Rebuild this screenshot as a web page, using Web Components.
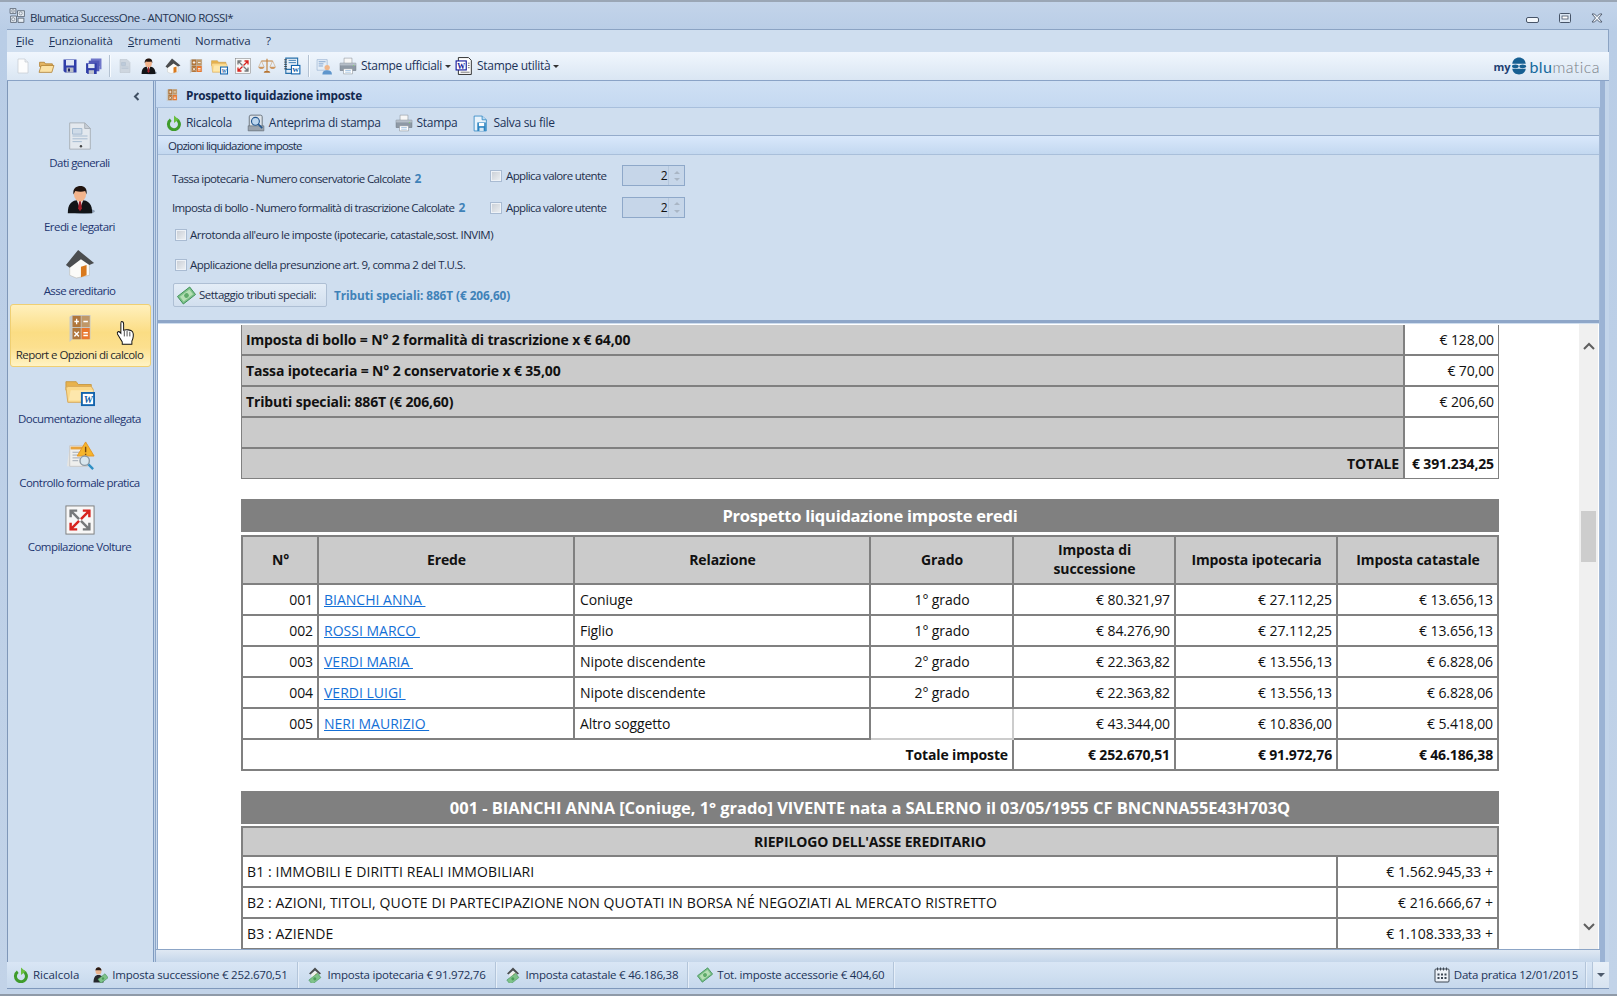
<!DOCTYPE html>
<html lang="it"><head><meta charset="utf-8"><title>Blumatica SuccessOne</title>
<style>
html,body{margin:0;padding:0;height:996px;overflow:hidden;background:#bcd0e8}
body{font-family:"Open Sans","Liberation Sans",sans-serif}
</style></head><body>
<app-window>
  <win-title slot="title">Blumatica SuccessOne - ANTONIO ROSSI*</win-title>
  <win-menu slot="menu"></win-menu>
  <win-toolbar slot="toolbar"></win-toolbar>
  <nav-rail slot="rail">
    <nav-item icon="doc">Dati generali</nav-item>
    <nav-item icon="person">Eredi e legatari</nav-item>
    <nav-item icon="house">Asse ereditario</nav-item>
    <nav-item icon="calc" active>Report e Opzioni di calcolo</nav-item>
    <nav-item icon="folderword">Documentazione allegata</nav-item>
    <nav-item icon="audit">Controllo formale pratica</nav-item>
    <nav-item icon="volture">Compilazione Volture</nav-item>
  </nav-rail>
  <task-panel slot="main">
    <task-toolbar slot="toolbar"></task-toolbar>
    <options-panel slot="options"></options-panel>
    <report-view slot="report"></report-view>
  </task-panel>
  <status-bar slot="status"></status-bar>
</app-window>
<script>
const ICONS={
doc:`<path d="M5 2h16l6 6v22H5z" fill="#e3e8ee" stroke="#a9b0b8"/><path d="M21 2v6h6z" fill="#c8ced6" stroke="#a9b0b8"/><path d="M8 8h10v6H8zM8 16h16M8 19h16M8 22h10" stroke="#a3b9cf" fill="#cfdbe8"/><circle cx="17" cy="27" r="1.3" fill="#444"/>`,
person:`<ellipse cx="20" cy="28" rx="12" ry="3" fill="#8f9fb4"/><path d="M3 30c0-9 3-14 13-14s13 5 13 14z" fill="#121417"/><path d="M12.500 16l3.500 9 3.500-9z" fill="#eee"/><path d="M15 17h2l1 8-2 3-2-3z" fill="#a3212b"/><ellipse cx="16" cy="9.500" rx="6.500" ry="8" fill="#f2b48c"/><path d="M9 10C8 3 12.500 1 16.500 1S24 3.500 23 10l-1.500-3.500c-3 1-6.500 1-10.500 0z" fill="#21140f"/>`,
house:`<path d="M5 18L17 9l9 7v12l-14 3-7-3z" fill="#fbfbf8" stroke="#bdbdb7" stroke-width=".7"/><path d="M17 19l6-2v11l-6 2z" fill="#d9791c"/><path d="M1 17L14 1l17 14-5 2-9-6L5 20z" fill="#4b4d4f"/>`,
calc:`<path d="M2 4l4-2h24v26H6l-4 3z" fill="#c7c9c8"/><path d="M6 3h11v12H6z" fill="#b0763c"/><path d="M18 3h11v12H18z" fill="#c09868"/><path d="M6 16h11v12H6z" fill="#b0763c"/><path d="M18 16h11v12H18z" fill="#e8772e"/><path d="M8.500 9h6M11.500 6v6M20.500 9h6M8.500 20l6 5M14.500 20l-6 5M20.500 21h6M20.500 24h6" stroke="#fff" stroke-width="1.700"/>`,
folderword:`<path d="M1 5h11l2 3h14v6H1z" fill="#e8b24c" stroke="#c89a46"/><path d="M3 27L1 11l3-1h24l2 3v14z" fill="#fbd98a" stroke="#d8a95a"/><path d="M4 25l2-11h24l-3 11z" fill="#fde7ac"/><path d="M17 16h15v15H17z" fill="#1364ad"/><path d="M19 18h11v11H19z" fill="#fff"/><text x="24.500" y="27.500" text-anchor="middle" font-family="Liberation Serif" font-style="italic" font-weight="700" font-size="11" fill="#0f5ea6">W</text>`,
audit:`<path d="M5 6h19v21H2z" fill="#e5e5e3"/><path d="M5 5h19v22H5z" fill="#efefed" stroke="#c7c7c7"/><path d="M6 6h14v3H6z" fill="#e8a33c"/><path d="M8 12h9M8 15h7M8 18h8M8 21h6" stroke="#9fa9b3"/><path d="M22 1l9 15H13z" fill="#f6b52a" stroke="#e29324"/><path d="M22 6v6M22 13.500v1.500" stroke="#7a4a10" stroke-width="1.500"/><circle cx="21" cy="21" r="5" fill="#d8e6ee" stroke="#8b98a3" stroke-width="1.500"/><path d="M25 25l5 5" stroke="#2f8fc4" stroke-width="2.500"/>`,
volture:`<rect x="1" y="1" width="30" height="30" fill="#f7f7f7" stroke="#7b7b7b"/><g fill="none" stroke-width="2.600"><path d="M6 13V6h7M6 6l9 9M26 19v7h-7M26 26l-9-9" stroke="#77797b"/><path d="M26 13V6h-7M26 6l-9 9M6 19v7h7M6 26l9-9" stroke="#d7231e"/></g>`,
fnew:`<path d="M6 2h14l6 6v22H6z" fill="#fdfdfd" stroke="#c7ccd3" stroke-width="1.500"/><path d="M20 2v6h6" fill="#eceff3" stroke="#c7ccd3" stroke-width="1.500"/>`,
open:`<path d="M3 8h9l2 3h13v5H3z" fill="#e5b765" stroke="#b07d2f" stroke-width="1.500"/><path d="M2 27l4-13h24l-4 13z" fill="#fbe2a5" stroke="#b07d2f" stroke-width="1.500"/>`,
save:`<path d="M3 3h26v26H6l-3-3z" fill="#2f3da8"/><path d="M8 4h16v11H8z" fill="#dfe6f4"/><path d="M9 19h14v10H9z" fill="#b9bdc6"/><path d="M12 21h4v6h-4z" fill="#222a66"/>`,
saveall:`<path d="M11 1h20v20h-4v-6H11z" fill="#6f76c9"/><path d="M7 5h20v20H7z" fill="#5158b8"/><path d="M2 10h20v20H5l-3-3z" fill="#2f3da8"/><path d="M6 11h12v8H6z" fill="#dfe6f4"/><path d="M7 23h10v7H7z" fill="#c0c4cc"/>`,
fdoc:`<path d="M6 3h14l6 6v20H6z" fill="#ced6df" stroke="#b8c0c9"/><path d="M9 9h8v6H9zM9 18h14M9 21h14" stroke="#aebccc" fill="#bccada"/>`,
scales:`<path d="M16 3v23M6 7h20" stroke="#c1803a" stroke-width="2"/><path d="M10 28h12l-2-3h-8z" fill="#b5722f"/><path d="M6 7l-5 11h10zM26 7l-5 11h10z" fill="none" stroke="#c99a63"/><path d="M1 18c1 4 9 4 10 0zM21 18c1 4 9 4 10 0z" fill="#c9813b"/>`,
wordbook:`<path d="M5 2h21v20H5z" fill="#e8f0f8" stroke="#2770aa" stroke-width="2"/><path d="M2 5h5M2 9h5M2 13h5M2 17h5M2 21h5" stroke="#333" stroke-width="1.500"/><path d="M10 6h13M10 10h13" stroke="#2770aa" stroke-width="1.500"/><path d="M5 22v7h17" fill="none" stroke="#2770aa" stroke-width="2"/><path d="M14 14h17v17H14z" fill="#1364ad"/><path d="M16 16h13v13H16z" fill="#fff"/><text x="22.500" y="27.500" text-anchor="middle" font-family="Liberation Serif" font-weight="700" font-size="12" fill="#0f5ea6">W</text>`,
userdoc:`<path d="M2 3h19v20H2z" fill="#e5eef8" stroke="#87a5c9"/><path d="M5 7h13M5 11h9M5 15h8" stroke="#6f96c5" stroke-width="1.500"/><circle cx="21" cy="18" r="5" fill="#f0b68a"/><path d="M12 31c0-6 3-8 9-8s9 2 9 8z" fill="#5f96cc"/>`,
printer:`<path d="M9 2h14v10H9z" fill="#f7f7f7" stroke="#8b9299"/><path d="M2 11h28v13H2z" fill="#8e99a5" stroke="#6a737c"/><path d="M2 11h28v4H2z" fill="#b5bec8"/><path d="M8 21h16v9H8z" fill="#fff" stroke="#8b9299"/><path d="M11 24h10M11 27h10" stroke="#6fa0cf"/><circle cx="26" cy="15" r="1" fill="#7fdc68"/>`,
worddoc:`<path d="M6 1h18l5 5v25H6z" fill="#fff" stroke="#111" stroke-width="1.500"/><path d="M1 6h20v18H1z" fill="#11189b"/><path d="M3 8h16v14H3z" fill="#fff"/><text x="11" y="20.500" text-anchor="middle" font-family="Liberation Serif" font-weight="700" font-size="14" fill="#11189b">W</text><path d="M23 11h3M23 15h3M23 19h3M10 27h16" stroke="#111"/>`,
refresh:`<path d="M9.500 9.500a11 11 0 1 0 11-1" fill="none" stroke="#3f9c2c" stroke-width="6"/><path d="M14 1l9 8-9 7z" fill="#69bf3f" transform="translate(2 0)"/>`,
preview:`<path d="M4 5a3 3 0 0 1 3-3h17a3 3 0 0 1 3 3v24H4z" fill="#dee4ea" stroke="#5d6670" stroke-width="1.500"/><path d="M2 21h28v9H2z" fill="#9aa3ad" stroke="#5d6670"/><circle cx="15" cy="13" r="7" fill="#bcd6ee" stroke="#24578f" stroke-width="2"/><path d="M20 18l7 7" stroke="#24578f" stroke-width="3"/>`,
savefile:`<path d="M4 2h15l8 7v21H4z" fill="#e8f3fc" stroke="#2c84c1" stroke-width="1.500"/><path d="M19 2v7h8" fill="#bedcf2" stroke="#2c84c1" stroke-width="1.500"/><path d="M10 14h16v16H10z" fill="#2c84c1"/><path d="M13 15h10v6H13z" fill="#fff"/><path d="M14 24h8v6h-8z" fill="#d8e8f4"/>`,
money:`<g transform="rotate(-38 16 16)"><rect x="3" y="8" width="26" height="16" fill="#7fc28a" stroke="#3c8f55" stroke-width="1.500"/><rect x="6" y="11" width="20" height="10" fill="#b6dfb5"/><circle cx="16" cy="16" r="4" fill="#5fab6a"/></g>`,
personmoney:`<ellipse cx="13" cy="8" rx="6" ry="7" fill="#e9b48f"/><path d="M7 7c0-5 3-6.500 6-6.500S19 3 19 7c-4 0-8-1-12 0z" fill="#2a1a14"/><path d="M3 31c0-10 3-15 10-15s10 5 10 15z" fill="#26282c"/><g transform="rotate(-38 22 23)"><rect x="13" y="18" width="18" height="10" fill="#7fc28a" stroke="#3c8f55"/><circle cx="22" cy="23" r="2.500" fill="#4a9d58"/></g>`,
housemoney:`<path d="M14 1L2 13l3 2 9-8 9 8 3-2z" fill="#4b4d4f"/><path d="M7 14l7-6 7 6v8H7z" fill="#efefec"/><path d="M15 14l4-1v8l-4 1z" fill="#d9791c"/><g transform="rotate(-38 14 24)"><rect x="3" y="18" width="22" height="11" fill="#7fc28a" stroke="#3c8f55"/><circle cx="14" cy="23.500" r="3" fill="#4a9d58"/></g>`,
calendar:`<rect x="2" y="4" width="28" height="26" rx="2" fill="#edf2f8" stroke="#3c4652" stroke-width="2"/><path d="M7 1v6M13 1v6M19 1v6M25 1v6" stroke="#3c4652" stroke-width="2"/><path d="M7 13h4v4H7zM14 13h4v4h-4zM21 13h4v4h-4zM7 20h4v4H7zM14 20h4v4h-4zM21 20h4v4h-4z" fill="#3c4652"/>`,
app:`<path d="M2 3h11v9H2zM16 7h13v11H16zM3 17h11v12H3zM17 21h11v8H17z" fill="#e8eef5" stroke="#4f5b68" stroke-width="1.500"/><circle cx="7.500" cy="7.500" r="2.500" fill="none" stroke="#4f5b68"/><circle cx="22" cy="12" r="3" fill="none" stroke="#4f5b68"/><circle cx="8" cy="23" r="3" fill="none" stroke="#4f5b68"/>`,
hand:`<path d="M11 2c2 0 3 1 3 3v8c3-1 11-.5 13 2 2 3 1 9-1 12v4H12v-3L5 18c-1-3 2-4 4-2l1 1V5c0-2 0-3 1-3z" fill="#fff" stroke="#111" stroke-width="1.400"/><path d="M15 14v7M19 14v7M23 15v6" stroke="#111" stroke-width="1"/>`
};
function def(name,css,html,setup){
  customElements.define(name,class extends HTMLElement{
    constructor(){super();const r=this.attachShadow({mode:"open"});r.innerHTML=`<style>${css}</style>`+(typeof html==="function"?html(this):html);}
    connectedCallback(){if(setup)setup(this)}
  });
}
customElements.define("ui-icon",class extends HTMLElement{
  connectedCallback(){
    if(this.shadowRoot)return;
    const s=this.getAttribute("size")||16,n=this.getAttribute("name");
    const w=this.getAttribute("w")||s,h=this.getAttribute("h")||s;
    this.attachShadow({mode:"open"}).innerHTML=`<style>:host{display:inline-flex;flex:none;width:${w}px;height:${h}px}svg{display:block;width:100%;height:100%}</style><svg viewBox="0 0 32 32" preserveAspectRatio="none">${ICONS[n]||""}</svg>`;
  }
});
const UI=`font:11.5px/1.2 "Open Sans","Liberation Sans",sans-serif;letter-spacing:-.42px;color:#1c3358`;

def("app-window",`
:host{display:flex;flex-direction:column;width:1617px;height:996px;box-sizing:border-box;background:linear-gradient(#c3d4ea,#b9cde6 30px,#c2d3e8);border-top:2px solid #9aa6b5;border-bottom:2px solid #8f9aa8;overflow:hidden}
.frame{margin:0 8px 0 7px;display:flex;flex-direction:column;flex:1;min-height:0}
.work{display:flex;flex:1;min-height:0;background:#c3d5ea;border-top:1px solid #8aa3c6}
`,`<slot name="title"></slot><div class="frame"><slot name="menu"></slot><slot name="toolbar"></slot><div class="work"><slot name="rail"></slot><slot name="main"></slot></div><slot name="status"></slot></div><div style="height:5px"></div>`);

def("win-title",`
:host{display:flex;align-items:center;height:27px;padding-left:9px;${UI};letter-spacing:-.55px;color:#1f3350;flex:none}
.t{margin-left:4px;padding-top:5px;font-size:11.5px}
.c{margin-left:auto;display:flex;align-items:center;padding-right:14px;gap:20px;padding-top:4px}
svg{display:block}
`,`<ui-icon name="app" size="17"></ui-icon><span class="t"><slot></slot></span>
<div class="c">
<svg width="13" height="6" viewBox="0 0 13 6" style="margin-top:5px"><rect x=".5" y=".5" width="12" height="5" rx="1.500" fill="#f3f7fb" stroke="#475468"/></svg>
<svg width="12" height="10" viewBox="0 0 12 10"><rect x=".5" y=".5" width="11" height="9" rx="1" fill="#dbe6f3" stroke="#475468"/><rect x="3" y="3" width="6" height="3" fill="#fff" stroke="#475468" stroke-width=".8"/></svg>
<svg width="12" height="10" viewBox="0 0 12 10"><path d="M1 1h2.500L6 3.500 8.500 1H11L7.500 5 11 9H8.500L6 6.500 3.500 9H1L4.500 5z" fill="#f3f7fb" stroke="#475468" stroke-width=".9"/></svg>
</div>`);

def("win-menu",`
:host{display:block;height:23px;flex:none;background:#cfdeef;border-top:1px solid #8ba3c3;border-right:1px solid #8ba3c3;box-sizing:border-box}
nav{display:flex;height:100%;align-items:center;${UI};font-size:11.500px;letter-spacing:-.1px;padding-left:9px;position:relative}
span{position:absolute;top:4px}u{text-decoration:underline}
`,`<nav>
<span style="left:9px"><u>F</u>ile</span><span style="left:42px"><u>F</u>unzionalità</span><span style="left:121px"><u>S</u>trumenti</span><span style="left:188px">Normativa</span><span style="left:259px">?</span></nav>`);

def("tool-btn",`
:host{display:inline-flex;align-items:center;height:100%;flex:none}
.l{margin-left:4px}
.car{width:0;height:0;border:3px solid transparent;border-top:3px solid #333;border-bottom:0;margin-left:3px;margin-top:1px}
`,h=>`<ui-icon name="${h.getAttribute("icon")}" w="${h.getAttribute("w")||h.getAttribute("size")||16}" h="${h.getAttribute("size")||16}"></ui-icon>${h.textContent.trim()?`<span class="l"><slot></slot></span>`:""}${h.hasAttribute("caret")?'<i class="car"></i>':""}`);

def("win-toolbar",`
:host{display:flex;align-items:center;height:28px;flex:none;background:linear-gradient(#f0f6fd,#dae6f3);padding-left:8px;box-sizing:border-box;${UI};font-size:12px;letter-spacing:-.3px;margin-right:0}
.g{display:flex;align-items:center;height:100%;gap:7px}
.s{width:1px;height:22px;background:#b4c2d2;box-shadow:1px 0 #f7fbff;margin:0 7px 0 7px}
.logo{margin-left:auto;display:flex;align-items:center;gap:0;padding-right:9px;font:300 16px "Lato",sans-serif;letter-spacing:.45px}
.my{font:700 11px "Open Sans",sans-serif;color:#1d3f73;letter-spacing:-.1px}
.b{color:#16699d;font-weight:400;margin-left:1px}.m{color:#7a8087}
`,`<div class="g">
<tool-btn icon="fnew" size="16"></tool-btn><tool-btn icon="open" size="17"></tool-btn><tool-btn icon="save" size="16"></tool-btn><tool-btn icon="saveall" size="17"></tool-btn></div><i class="s"></i>
<div class="g"><tool-btn icon="fdoc" size="16"></tool-btn><tool-btn icon="person" size="17"></tool-btn><tool-btn icon="house" size="16" style="margin-left:1px"></tool-btn><tool-btn icon="calc" size="16" w="14" style="margin-left:1px"></tool-btn><tool-btn icon="folderword" size="17" style="margin-left:1px"></tool-btn><tool-btn icon="volture" size="16"></tool-btn><tool-btn icon="scales" size="18"></tool-btn><tool-btn icon="wordbook" size="18"></tool-btn></div><i class="s" style="margin-left:7px"></i>
<tool-btn icon="userdoc" size="17"></tool-btn><tool-btn icon="printer" size="18" caret style="margin-left:6px">Stampe ufficiali</tool-btn><tool-btn icon="worddoc" size="18" caret style="margin-left:4px">Stampe utilità</tool-btn>
<div class="logo"><span class="my">my</span><svg width="18" height="18" viewBox="0 0 32 32"><path d="M4 12C5 5 10 1 16 1s11 4 12 11z" fill="#165f92"/><path d="M4 21h24c-1 7-6 10-12 10S5 28 4 21z" fill="#165f92"/><ellipse cx="9.500" cy="16.500" rx="6" ry="3.300" fill="#165f92"/><ellipse cx="22.500" cy="16.500" rx="6" ry="3.300" fill="#165f92"/></svg><span><span class="b">blu</span><span class="m">matica</span></span></div>`);

def("nav-rail",`
:host{display:flex;flex-direction:column;width:147px;flex:none;box-sizing:border-box;background:#cfdeef;border-left:1px solid #7f97b8;border-right:1px solid #7f9bc0;padding:0 2px}
.c{height:31px;display:flex;align-items:center;justify-content:flex-end;padding-right:11px;flex:none}
.list{display:flex;flex-direction:column;gap:1px}
`,`<div class="c"><svg width="7" height="9" viewBox="0 0 7 9"><path d="M5.500 1L2 4.500 5.500 8" fill="none" stroke="#3f4f63" stroke-width="2"/></svg></div><div class="list"><slot></slot></div>`);

def("nav-item",`
:host{display:flex;flex-direction:column;align-items:center;height:63px;box-sizing:border-box;padding:7px 2px 0 0;border:1px solid transparent;border-radius:3px;position:relative;${UI};font-size:11.500px;letter-spacing:-.57px;color:#1d3570}
:host([active]){background:linear-gradient(#fff0bd,#fbdd84 45%,#fce08f 70%,#fff3c4);border-color:#efcf73;color:#2a2a2a}
.i{height:31px;display:flex;align-items:center;justify-content:center}
.l{margin-top:5px;white-space:nowrap}
.h{position:absolute;left:103px;top:15px}
`,h=>{const c=h.getAttribute("icon")==="calc";return `<div class="i"><ui-icon name="${h.getAttribute("icon")}" w="${c?24:30}" h="30"></ui-icon></div><div class="l"><slot></slot></div>${h.hasAttribute("active")?'<ui-icon class="h" name="hand" w="22" h="25"></ui-icon>':""}`});

def("task-panel",`
:host{display:flex;flex-direction:column;width:1450px;margin-left:1px;flex:none;box-sizing:border-box;border-left:1px solid #8da6c8;border-right:5px solid #9bb3d4;background:#c9daee}
.h{height:27px;flex:none;display:flex;align-items:center;padding:2px 0 0 10px;gap:8px;background:linear-gradient(#cfe0f4,#c5d9f1);border-bottom:1px solid #a8bfdc;box-sizing:border-box;${UI};font-weight:700;font-size:11.800px;letter-spacing:-.27px;color:#13294f}
.b{flex:1;display:flex;flex-direction:column;min-height:0;margin:0 0 0 1px;background:#cfdeef;border-left:1px solid #8da6c8;border-right:1px solid #a3b9d6}
.f{height:12px;flex:none;background:linear-gradient(#dfe8f3,#c5d6ea);border-top:1px solid #8ca5c6}
`,`<div class="h"><ui-icon name="calc" size="14" w="12"></ui-icon>Prospetto liquidazione imposte</div><div class="b"><slot name="toolbar"></slot><slot name="options"></slot><slot name="report"></slot></div><div class="f"></div>`);

def("task-toolbar",`
:host{display:flex;align-items:center;height:27px;flex:none;padding:3px 0 0 8px;gap:15px;background:#cfdeef;box-sizing:border-box;${UI};font-size:12px;letter-spacing:-.3px}
`,`<tool-btn icon="refresh" size="16">Ricalcola</tool-btn><tool-btn icon="preview" size="18">Anteprima di stampa</tool-btn><tool-btn icon="printer" size="18" style="margin-left:-1px">Stampa</tool-btn><tool-btn icon="savefile" size="17">Salva su file</tool-btn>`);

def("check-box",`
:host{display:inline-block;width:12px;height:12px;flex:none;box-sizing:border-box;background:linear-gradient(135deg,#c8cdd4,#eef1f4);border:1px solid #a9bbd2;box-shadow:inset 0 0 0 1px #eef2f7}
`,``);
def("spin-box",`
:host{display:inline-flex;width:63px;height:21px;box-sizing:border-box;flex:none;background:#c6d6e9;border:1px solid #8ea8c9;font:12px "Open Sans",sans-serif;color:#111}
.v{flex:1;text-align:right;padding-right:1px;line-height:19px}
.a{width:15px;border-left:1px solid #b5c7dc;display:flex;flex-direction:column;align-items:center;justify-content:space-evenly}
i{width:0;height:0;border:3px solid transparent}
.u{border-bottom:3px solid #a9b6c5;border-top:0}.d{border-top:3px solid #a9b6c5;border-bottom:0}
`,`<span class="v"><slot></slot></span><span class="a"><i class="u"></i><i class="d"></i></span>`);

def("options-panel",`
:host{display:block;flex:none;background:#cfdeef;border-bottom:3px solid #8ea6c8;${UI};font-size:11.500px;letter-spacing:-.52px;color:#1e2f4c}
.h{height:20px;box-sizing:border-box;display:flex;align-items:center;padding:1px 0 0 10px;background:linear-gradient(#d9e8fb,#c3d8f0);border-top:1px solid #94abcb;border-bottom:1px solid #a9bfda;letter-spacing:-.78px}
.body{height:165px;box-sizing:border-box;padding:10px 0 0 14px;display:flex;flex-direction:column}
.r{display:grid;grid-template-columns:318px 12px 120px 63px;align-items:center;height:21px}
.r b{color:#3f82b8;font-weight:700;margin-left:2px;font-size:12px}
.r .lb{padding-top:7px;letter-spacing:-.62px}.r .ap{padding-left:4px;letter-spacing:-.62px}
.c{display:flex;align-items:center;gap:3px;height:20px;padding-left:3px}
.btn{display:inline-flex;align-items:center;gap:3px;width:154px;height:24px;box-sizing:border-box;padding-left:3px;border:1px solid #aebfd4;border-radius:2px;background:linear-gradient(#e4edf7,#d2dfee)}
.t{display:flex;align-items:center;gap:7px;margin:8px 0 0 1px}
.t b{color:#3f82b8;font-size:11.800px;letter-spacing:-.07px}
`,`<div class="h">Opzioni liquidazione imposte</div><div class="body">
<div class="r"><span class="lb">Tassa ipotecaria - Numero conservatorie Calcolate <b>2</b></span><check-box></check-box><span class="ap">Applica valore utente</span><spin-box>2</spin-box></div>
<div class="r" style="margin-top:11px"><span class="lb" style="padding-top:1px;letter-spacing:-.66px">Imposta di bollo - Numero formalità di trascrizione Calcolate <b>2</b></span><check-box></check-box><span class="ap">Applica valore utente</span><spin-box>2</spin-box></div>
<div class="c" style="margin-top:7px"><check-box></check-box>Arrotonda all'euro le imposte (ipotecarie, catastale,sost. INVIM)</div>
<div class="c" style="margin-top:10px"><check-box></check-box>Applicazione della presunzione art. 9, comma 2 del T.U.S.</div>
<div class="t"><span class="btn"><ui-icon name="money" size="19"></ui-icon>Settaggio tributi speciali:</span><b>Tributi speciali: 886T (€ 206,60)</b></div>
</div>`);

const TABLE=`
table{border-collapse:separate;border-spacing:0;table-layout:fixed;width:1258px;font:14px "Open Sans","Liberation Sans",sans-serif;color:#111;letter-spacing:-.1px}
td,th{box-sizing:border-box;height:31px;padding:0 4px 0 5px;border-right:2px solid #808080;border-bottom:2px solid #808080;white-space:nowrap;overflow:hidden;background:#fff;font-weight:400}
th,.g{background:#cbcbcb}
td:first-child,th:first-child{border-left:2px solid #808080}
.r{text-align:right}.c{text-align:center}.b{font-weight:700;letter-spacing:-.14px}
a{color:#1570d6;text-decoration:underline;letter-spacing:0}
`;
def("report-summary",`:host{display:block}${TABLE}
td:first-child{border-left-width:1px;padding-left:4px}td:last-child{border-right-width:1px}
tr:last-child td{border-bottom-width:1px;height:30px}`,()=>{
const rows=[["Imposta di bollo = N° 2 formalità di trascrizione x € 64,00","€ 128,00"],["Tassa ipotecaria = N° 2 conservatorie x € 35,00","€ 70,00"],["Tributi speciali: 886T (€ 206,60)","€ 206,60"],["",""]];
return `<table><colgroup><col style="width:1164px"><col></colgroup>`+rows.map(r=>`<tr><td class="g b">${r[0]}</td><td class="r">${r[1]}</td></tr>`).join("")+`<tr><td class="g b r">TOTALE</td><td class="r b">€ 391.234,25</td></tr></table>`});

def("report-band",`:host{display:flex;align-items:center;justify-content:center;width:1258px;height:33px;background:#808080;color:#fff;font:700 16.500px "Open Sans","Liberation Sans",sans-serif;letter-spacing:-.25px}`,`<slot></slot>`);

def("report-heirs",`:host{display:block;margin-top:3px}${TABLE}
tr:first-child th{border-top:2px solid #808080;height:50px;white-space:normal;font-weight:700;line-height:19px;padding-bottom:2px}
.t td:first-child{border-left:2px solid #808080}
`,()=>{
const R=[["001","BIANCHI ANNA","Coniuge","1° grado","€ 80.321,97","€ 27.112,25","€ 13.656,13"],["002","ROSSI MARCO","Figlio","1° grado","€ 84.276,90","€ 27.112,25","€ 13.656,13"],["003","VERDI MARIA","Nipote discendente","2° grado","€ 22.363,82","€ 13.556,13","€ 6.828,06"],["004","VERDI LUIGI","Nipote discendente","2° grado","€ 22.363,82","€ 13.556,13","€ 6.828,06"],["005","NERI MAURIZIO","Altro soggetto","","€ 43.344,00","€ 10.836,00","€ 5.418,00"]];
return `<table><colgroup><col style="width:78px"><col style="width:256px"><col style="width:296px"><col style="width:143px"><col style="width:162px"><col style="width:162px"><col></colgroup>
<tr><th>N°</th><th>Erede</th><th>Relazione</th><th>Grado</th><th>Imposta di successione</th><th>Imposta ipotecaria</th><th>Imposta catastale</th></tr>`+
R.map(r=>`<tr><td class="r">${r[0]}</td><td><a href="#">${r[1]}&nbsp;</a></td><td>${r[2]}</td><td class="c" ${r[3]?"":'style="border-right-color:#ccc;border-bottom-color:#ccc"'}>${r[3]}</td><td class="r">${r[4]}</td><td class="r">${r[5]}</td><td class="r">${r[6]}</td></tr>`).join("")+
`<tr class="t"><td colspan="4" class="r b">Totale imposte</td><td class="r b">€ 252.670,51</td><td class="r b">€ 91.972,76</td><td class="r b">€ 46.186,38</td></tr></table>`});

def("report-assets",`:host{display:block;margin-top:2px}${TABLE}
tr:first-child td{border-top:2px solid #808080}
td:first-child{padding-left:4px}
.u{letter-spacing:.12px}.v{letter-spacing:.02px}
`,()=>{
const R=[["B1 : IMMOBILI E DIRITTI REALI IMMOBILIARI","€ 1.562.945,33 +"],["B2 : AZIONI, TITOLI, QUOTE DI PARTECIPAZIONE NON QUOTATI IN BORSA NÉ NEGOZIATI AL MERCATO RISTRETTO","€ 216.666,67 +"],["B3 : AZIENDE","€ 1.108.333,33 +"]];
return `<table><colgroup><col style="width:1097px"><col></colgroup><tr><td colspan="2" class="g c b">RIEPILOGO DELL'ASSE EREDITARIO</td></tr>`+R.map(r=>`<tr><td class="u">${r[0]}</td><td class="r v">${r[1]}</td></tr>`).join("")+`</table>`});

def("report-view",`
:host{flex:1;min-height:0;display:flex;background:#fff;overflow:hidden;margin-top:1px}
.s{flex:1;min-width:0;overflow:hidden;padding:1px 0 0 83px}
.gap1{height:20px}.gap2{height:20px}
.bar{width:19px;flex:none;background:#f0f0f0;position:relative;display:flex;flex-direction:column;align-items:center;margin-right:1px}
.up{margin-top:18px}.th{width:15px;height:51px;background:#cdcdcd;margin-top:161px}
.dn{margin-top:auto;margin-bottom:18px}
`,`<div class="s"><report-summary></report-summary><div class="gap1"></div><report-band>Prospetto liquidazione imposte eredi</report-band><report-heirs></report-heirs><div class="gap2"></div><report-band style="letter-spacing:-.05px">001 - BIANCHI ANNA [Coniuge, 1° grado] VIVENTE nata a SALERNO il 03/05/1955 CF BNCNNA55E43H703Q</report-band><report-assets></report-assets></div>
<div class="bar"><svg class="up" width="12" height="8" viewBox="0 0 12 8"><path d="M1 7l5-5 5 5" fill="none" stroke="#5f5f5f" stroke-width="2"/></svg><div class="th"></div><svg class="dn" width="12" height="8" viewBox="0 0 12 8"><path d="M1 1l5 5 5-5" fill="none" stroke="#5f5f5f" stroke-width="2"/></svg></div>`);

def("status-item",`
:host{display:inline-flex;align-items:center;height:100%;gap:4px;box-sizing:border-box;flex:none;border-right:1px solid #b3c5da;box-shadow:1px 0 #e6eff9}
:host([plain]){border:0;box-shadow:none}
`,h=>`<ui-icon name="${h.getAttribute("icon")}" size="16"></ui-icon><span><slot></slot></span>`);

def("status-bar",`
:host{display:flex;align-items:center;height:27px;flex:none;box-sizing:border-box;background:linear-gradient(#d9e6f5,#c6d8ec);border-bottom:1px solid #7f98bb;${UI};font-size:11.500px;letter-spacing:-.22px;padding-left:6px}
status-item{padding-right:9px}
.sp{margin-left:auto}
.dd{width:16px;height:26px;background:linear-gradient(#e8f0f8,#d7e3f0);margin-left:7px;display:flex;align-items:center;justify-content:center;box-shadow:-1px 0 #b3c5da}
.dd i{width:0;height:0;border:4px solid transparent;border-top:4px solid #4d5a6c;border-bottom:0}
`,`<status-item plain icon="refresh" style="letter-spacing:-.02px">Ricalcola</status-item><status-item icon="personmoney" style="margin-left:4px">Imposta successione € 252.670,51</status-item><status-item icon="housemoney" style="margin-left:10px">Imposta ipotecaria € 91.972,76</status-item><status-item icon="housemoney" style="margin-left:10px">Imposta catastale € 46.186,38</status-item><status-item icon="money" style="margin-left:9px">Tot. imposte accessorie € 404,60</status-item><span class="sp"></span><status-item icon="calendar" style="padding-right:7px">Data pratica 12/01/2015</status-item><div class="dd"><i></i></div>`);
</script>
</body></html>
